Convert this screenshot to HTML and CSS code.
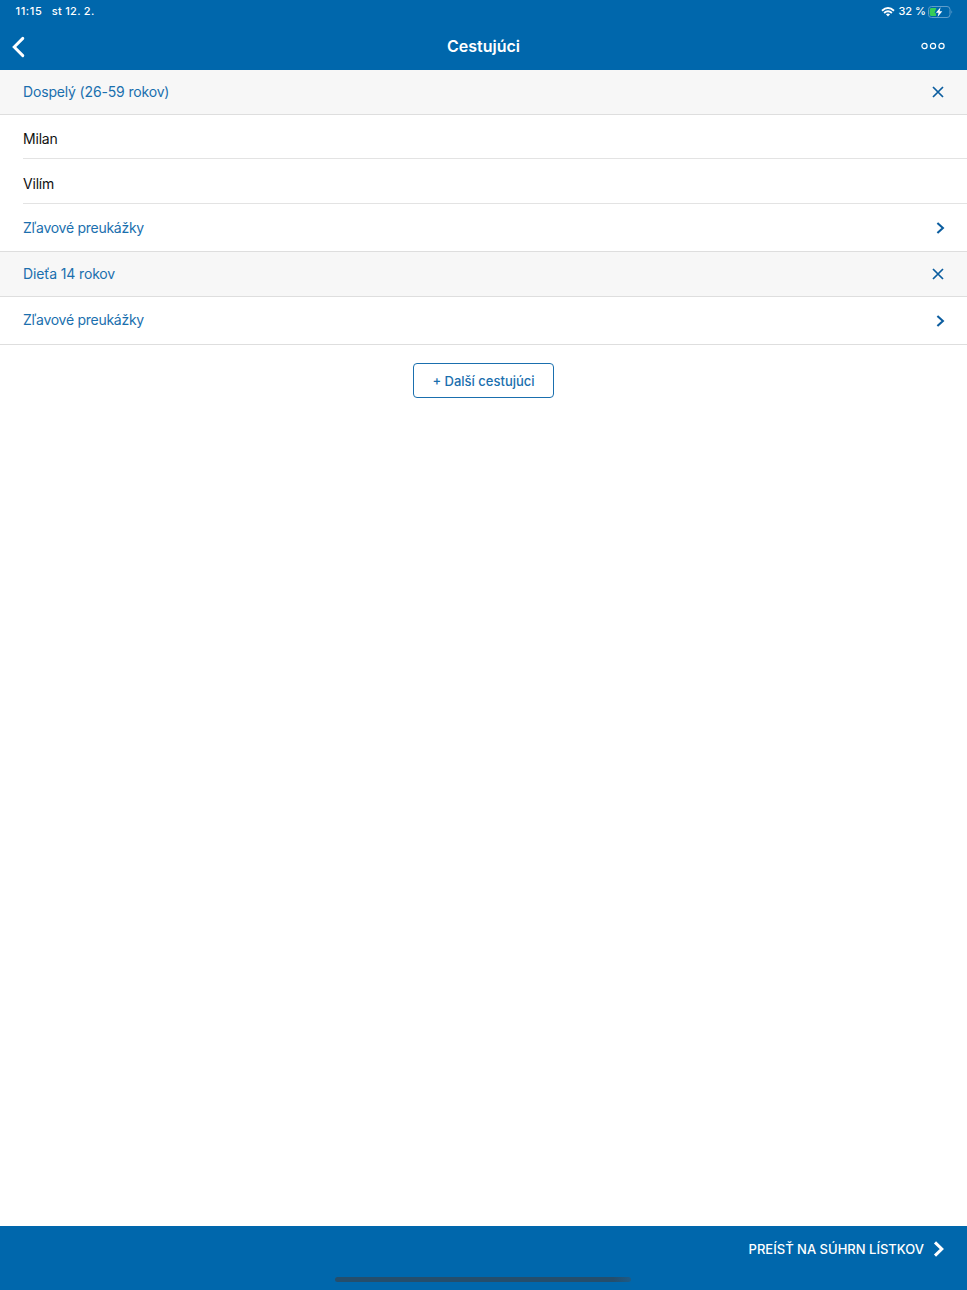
FILE: index.html
```html
<!DOCTYPE html>
<html lang="sk">
<head>
<meta charset="utf-8">
<title>Cestujúci</title>
<link rel="stylesheet" href="styles.css">
</head>
<body>
<div class="app">
  <header class="header">
    <div class="status">
      <div class="status-left"><span class="time">11:15</span><span class="date">st 12. 2.</span></div>
      <div class="status-right">
        <svg class="wifi" width="14" height="10" viewBox="0 0 14 10" fill="none" stroke="#fff" stroke-width="1.9"><path d="M1 3.7Q7-1.6 13 3.7M3.1 6Q7 2.6 10.9 6"/><path d="M7 9.4L4.9 7.3Q7 5.7 9.1 7.3Z" fill="#fff" stroke="none"/></svg>
        <span class="percent">32 %</span>
        <svg class="battery" width="26" height="12" viewBox="0 0 26 12"><rect x=".5" y=".5" width="21.5" height="11" rx="3" fill="none" stroke="#5f9dcb"/><path d="M3.4 2H8.4L6.6 6.8L8 7.4V10H3.4Q1.7 10 1.7 8.3V3.7Q1.7 2 3.4 2Z" fill="#37cc58"/><path d="M23.4 4.2Q25.2 6 23.4 7.8Z" fill="#5f9dcb"/><path d="M12.6 1.2L7.9 6.7H10.6L9.6 10.9L14.3 5.3H11.6Z" fill="#fff"/></svg>
      </div>
    </div>
    <nav class="nav">
      <svg class="back" width="14" height="22" viewBox="0 0 14 22" fill="none" stroke="#fff" stroke-width="2.9" stroke-linecap="round" stroke-linejoin="miter"><path d="M10.8 2.4L2.2 11L10.8 19.6"/></svg>
      <h1 class="title">Cestujúci</h1>
      <svg class="more" width="24" height="8" viewBox="0 0 24 8" fill="none" stroke="#fff" stroke-width="1.2"><circle cx="3.5" cy="4" r="2.6"/><circle cx="12" cy="4" r="2.6"/><circle cx="20.5" cy="4" r="2.6"/></svg>
    </nav>
  </header>
  <main class="content">
    <div class="section"><span class="t-adult">Dospelý (26-59 rokov)</span><svg class="close" width="12" height="12" viewBox="0 0 12 12"><path d="M1 1L11 11M11 1L1 11"/></svg></div>
    <div class="field field-first"><span class="t-name">Milan</span></div>
    <div class="field"><span class="t-name">Vilím</span></div>
    <div class="link"><span class="t-cards">Zľavové preukážky</span><svg class="chevron" width="9" height="12" viewBox="0 0 9 12"><path d="M1.4 1L6.9 6L1.4 11"/></svg></div>
    <div class="section"><span class="t-child">Dieťa 14 rokov</span><svg class="close" width="12" height="12" viewBox="0 0 12 12"><path d="M1 1L11 11M11 1L1 11"/></svg></div>
    <div class="link"><span class="t-cards t-raised">Zľavové preukážky</span><svg class="chevron" width="9" height="12" viewBox="0 0 9 12"><path d="M1.4 1L6.9 6L1.4 11"/></svg></div>
    <button class="add"><span>+ Další cestujúci</span></button>
  </main>
  <footer class="footer">
    <div class="next"><span class="t-next">PREÍSŤ NA SÚHRN LÍSTKOV</span><svg width="12" height="16" viewBox="0 0 12 16" fill="none" stroke="#fff" stroke-width="3"><path d="M2 1.4L8.8 8L2 14.6"/></svg></div>
    <div class="home"></div>
  </footer>
</div>
</body>
</html>
```

FILE: styles.css
```css
* { box-sizing: border-box; }
body { margin: 0; background: #fff; font-family: Inter, "Noto Sans", sans-serif; font-size: 14px; color: #111; }
svg { display: block; flex: none; }
span, h1 { white-space: nowrap; }
.app { height: 1290px; display: flex; flex-direction: column; overflow: hidden; }
.header { height: 70px; background: #0067ac; color: #fff; }
.status { height: 23px; padding: 0 13px 0 15.5px; display: flex; justify-content: space-between; align-items: center; font-size: 11px; font-weight: 500; line-height: 23px; }
.status-left { display: flex; gap: 9.5px; }
.time { letter-spacing: .6px; }
.date { letter-spacing: .27px; }
.status-right { display: flex; align-items: center; }
.percent { margin: 0 2px 0 3px; }
.nav { height: 46px; padding: 0 22px 0 11px; display: grid; grid-template-columns: 1fr auto 1fr; align-items: center; }
.title { margin: 0 0 0 11px; font-size: 16px; font-weight: 600; line-height: 47px; }
.back { margin-left: 1px; }
.more { justify-self: end; margin-bottom: 1px; }
.content { flex: 1; display: flex; flex-direction: column; }
.section, .link { display: flex; align-items: center; justify-content: space-between; padding: 0 22px 0 23px; color: #1a6fae; border-bottom: 1px solid #dedede; }
.section { height: 45px; padding-bottom: 1px; background: #f7f7f7; }
.t-adult, .t-child { letter-spacing: -.16px; }
.t-cards { letter-spacing: -.27px; }
.t-raised { margin-bottom: 2px; }
.t-name { letter-spacing: -.2px; }
.field { height: 45px; margin-left: 23px; padding-top: 4px; display: flex; align-items: center; border-bottom: 1px solid #e3e3e3; }
.field-first { height: 44px; }
.link { height: 48px; }
.close, .chevron { fill: none; stroke: #0b5d9f; }
.close { stroke-width: 1.7; margin-right: 1px; }
.section .close { margin-top: 1px; }
.chevron { stroke-width: 2.1; }
.add { width: 141px; height: 35px; margin: 18px auto 0; padding: 0; border: 1px solid #1a6fae; border-radius: 4px; background: #fff; color: #1a6fae; font: 500 13px Inter, sans-serif; }
.footer { height: 64px; background: #0067ac; color: #fff; display: flex; flex-direction: column; justify-content: space-between; }
.next { height: 45px; padding: 0 22px 0 0; display: flex; align-items: center; justify-content: flex-end; gap: 9px; font-size: 13px; font-weight: 500; }
.home { width: 296px; height: 5px; margin: 0 336px 8px 335px; border-radius: 3px; background: linear-gradient(90deg, #254e6c 94%, #1d5b87); }
```
